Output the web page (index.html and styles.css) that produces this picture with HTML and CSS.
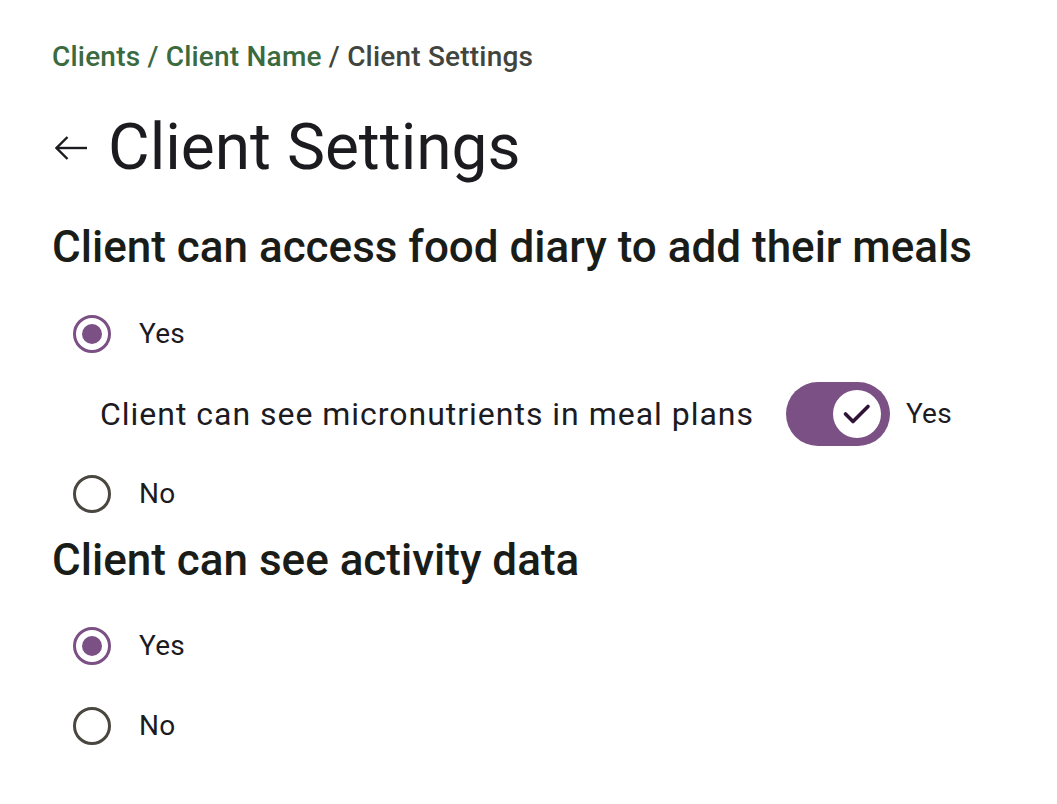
FILE: index.html
```html
<!DOCTYPE html>
<html lang="en">
<head>
<meta charset="utf-8">
<title>Client Settings</title>
<link rel="stylesheet" href="styles.css">
</head>
<body>
<main class="page">
  <nav class="crumbs"><span class="crumb-link">Clients / Client Name</span><span class="crumb-current"> / Client Settings</span></nav>

  <div class="title-row">
    <span class="back" aria-label="Back">
      <svg width="32" height="24" viewBox="0 0 32 24" fill="none" stroke="#1c1b1f" stroke-width="2.4" stroke-linecap="butt" stroke-linejoin="miter">
        <path d="M1.5 12 H32"/>
        <path d="M12.5 1 L1.5 12 L12.5 23"/>
      </svg>
    </span>
    <h1 class="title">Client Settings</h1>
  </div>

  <section class="section">
    <h2 class="heading">Client can access food diary to add their meals</h2>
    <div class="option">
      <span class="radio-target"><span class="radio checked"></span></span>
      <span class="option-label">Yes</span>
    </div>
    <div class="sub-option">
      <span class="sub-label">Client can see micronutrients in meal plans</span>
      <span class="switch">
        <span class="thumb">
          <svg width="32" height="32" viewBox="0 0 32 32" fill="none" stroke="#2e1336" stroke-width="3.6" stroke-linecap="round" stroke-linejoin="round">
            <path d="M4.5 16 L12 23.5 L27 8.5"/>
          </svg>
        </span>
      </span>
      <span class="switch-label">Yes</span>
    </div>
    <div class="option">
      <span class="radio-target"><span class="radio"></span></span>
      <span class="option-label">No</span>
    </div>
  </section>

  <section class="section second">
    <h2 class="heading">Client can see activity data</h2>
    <div class="option">
      <span class="radio-target"><span class="radio checked"></span></span>
      <span class="option-label">Yes</span>
    </div>
    <div class="option">
      <span class="radio-target"><span class="radio"></span></span>
      <span class="option-label">No</span>
    </div>
  </section>
</main>
</body>
</html>
```

FILE: styles.css
```css
* { box-sizing: border-box; }

html, body {
  margin: 0;
  background: #ffffff;
}

body {
  font-family: Roboto, "Noto Sans", "Liberation Sans", sans-serif;
  color: #1c1b1f;
}

.page {
  padding: 39px 52px 40px 52px;
}

.crumbs {
  font-size: 28px;
  font-weight: 500;
  line-height: 36px;
  letter-spacing: 0.2px;
}

.crumb-link { color: #3b6a3f; }
.crumb-current { color: #41453e; }

.title-row {
  display: flex;
  align-items: center;
  margin-top: 33px;
  height: 80px;
}

.back {
  display: flex;
  align-items: center;
  margin-left: 3px;
  margin-right: 21px;
}

.title {
  margin: 0;
  font-size: 64px;
  font-weight: 400;
  line-height: 80px;
  color: #1c1b1f;
}

.section {
  display: flex;
  flex-direction: column;
}

.heading {
  margin: 33px 0 21px 0;
  font-size: 44px;
  font-weight: 500;
  line-height: 52px;
  color: #1a1c18;
}

.second .heading {
  margin-top: 0;
  margin-bottom: 20px;
}

.option {
  display: flex;
  align-items: center;
  height: 80px;
}

.radio-target {
  width: 80px;
  height: 80px;
  display: flex;
  align-items: center;
  justify-content: center;
}

.radio {
  width: 38px;
  height: 38px;
  border-radius: 50%;
  border: 3.5px solid #49473f;
  display: flex;
  align-items: center;
  justify-content: center;
}

.radio.checked {
  border-color: #7b5084;
}

.radio.checked::after {
  content: "";
  width: 20px;
  height: 20px;
  border-radius: 50%;
  background: #7b5084;
}

.option-label,
.switch-label {
  font-size: 28px;
  line-height: 40px;
  letter-spacing: 0.2px;
  color: #1c1b1f;
}

.option-label {
  margin-left: 7px;
}

.sub-option {
  display: flex;
  align-items: center;
  height: 80px;
  padding-left: 48px;
}

.sub-label {
  font-size: 32px;
  line-height: 48px;
  letter-spacing: 0.98px;
  color: #1c1b1f;
}

.switch {
  margin-left: 32px;
  width: 104px;
  height: 64px;
  border-radius: 32px;
  background: #7b5084;
  display: flex;
  align-items: center;
  justify-content: flex-end;
  padding-right: 9px;
}

.thumb {
  width: 48px;
  height: 48px;
  border-radius: 50%;
  background: #ffffff;
  display: flex;
  align-items: center;
  justify-content: center;
}

.switch-label {
  margin-left: 16px;
}
```
